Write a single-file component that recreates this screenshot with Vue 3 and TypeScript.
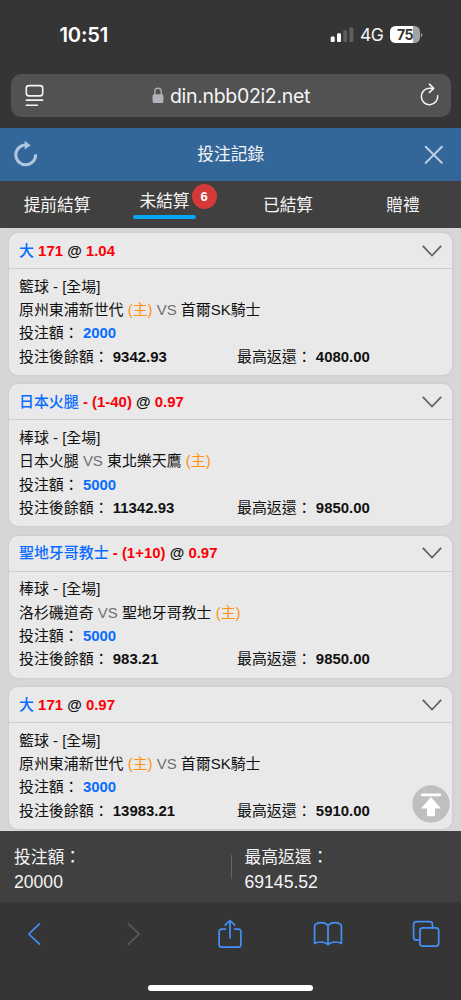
<script setup lang="ts">
interface Bet {
  pick: string
  line: string
  odds: string
  sport: string
  home: string
  away: string
  host: 'first' | 'second'
  stake: string
  balance: string
  payout: string
}

interface Tab {
  label: string
  key: string
  count?: number
}

const tabs: Tab[] = [
  { label: '提前結算', key: 'early' },
  { label: '未結算', key: 'open', count: 6 },
  { label: '已結算', key: 'settled' },
  { label: '贈禮', key: 'gift' },
]

const bets: Bet[] = [
  { pick: '大', line: '171', odds: '1.04', sport: '籃球', home: '原州東浦新世代', away: '首爾SK騎士', host: 'first', stake: '2000', balance: '9342.93', payout: '4080.00' },
  { pick: '日本火腿', line: '- (1-40)', odds: '0.97', sport: '棒球', home: '日本火腿', away: '東北樂天鷹', host: 'second', stake: '5000', balance: '11342.93', payout: '9850.00' },
  { pick: '聖地牙哥教士', line: '- (1+10)', odds: '0.97', sport: '棒球', home: '洛杉磯道奇', away: '聖地牙哥教士', host: 'second', stake: '5000', balance: '983.21', payout: '9850.00' },
  { pick: '大', line: '171', odds: '0.97', sport: '籃球', home: '原州東浦新世代', away: '首爾SK騎士', host: 'first', stake: '3000', balance: '13983.21', payout: '5910.00' },
]
</script>

<template>
  <div class="phone">
    <header class="browser">
      <div class="status">
        <span class="clock">10:51</span>
        <span class="signals">
          <svg class="bars" width="24" height="16" viewBox="0 0 24 16">
            <rect x="0.7" y="9.5" width="4" height="5.5" rx="1.2" fill="#fff" />
            <rect x="7" y="6.3" width="4" height="8.7" rx="1.2" fill="#fff" />
            <rect x="13.2" y="3.3" width="4" height="11.7" rx="1.2" fill="#5e5e5e" />
            <rect x="19.4" y="0.4" width="4" height="14.6" rx="1.2" fill="#5e5e5e" />
          </svg>
          <span class="net">4G</span>
          <span class="battery"><b>75</b></span>
          <svg class="nub" width="3" height="6" viewBox="0 0 3 6"><path d="M0.8 0.7 Q2.6 1.4 2.6 3 T0.8 5.3Z" fill="#8e8e8e" /></svg>
        </span>
      </div>
      <div class="address">
        <svg class="reader" width="20" height="24" viewBox="0 0 20 24" fill="none" stroke="#f4f4f4" stroke-width="1.6" stroke-linecap="round">
          <rect x="1.3" y="1.6" width="16.4" height="10.3" rx="2.6" />
          <path d="M1.3 16.1H17.7M1.3 21.3H12.4" />
        </svg>
        <span class="url">
          <svg class="lock" width="12" height="17" viewBox="0 0 12 17">
            <path d="M2.8 8V4.7C2.8 0.1 9.2 0.1 9.2 4.7V8" fill="none" stroke="#a9a8ae" stroke-width="1.5" />
            <rect x="0.6" y="7.2" width="10.8" height="8.8" rx="1.6" fill="#b3b2b8" />
          </svg>
          <span class="host">din.nbb02i2.net</span>
        </span>
        <svg class="reload" width="20" height="24" viewBox="0 0 20 24" fill="none" stroke="#f4f4f4" stroke-width="1.6" stroke-linecap="round" stroke-linejoin="round">
          <path d="M17.7 12.7A8.2 8.2 0 1 1 9.5 5.3H13.2" />
          <path d="M9.4 1.2L13.7 5.3L9.4 9.4" />
        </svg>
      </div>
    </header>

    <div class="titlebar">
      <svg class="refresh" width="26" height="28" viewBox="0 0 26 28">
        <path d="M22.6 14.3A9.9 9.9 0 1 1 12.8 5" fill="none" stroke="#b0c6de" stroke-width="3" />
        <path d="M11.7 0.7L17.7 5.2L11.7 9.6Z" fill="#b0c6de" />
      </svg>
      <h1>投注記錄</h1>
      <svg width="20" height="20" viewBox="0 0 20 20" fill="none" stroke="#bfd1e4" stroke-width="2" stroke-linecap="round">
        <path d="M1.7 1.7L17.9 17.9M17.9 1.7L1.7 17.9" />
      </svg>
    </div>

    <nav class="tabs">
      <span v-for="tab in tabs" :key="tab.key" class="tab" :class="[tab.key, { active: tab.count }]">
        {{ tab.label }}<i v-if="tab.count" class="badge">{{ tab.count }}</i>
      </span>
    </nav>

    <main class="list">
      <article v-for="(bet, i) in bets" :key="i" class="card">
        <div class="head">
          <div class="pick">
            <span class="blue name">{{ bet.pick }}</span> <span class="red">{{ bet.line }}</span> @ <span class="red">{{ bet.odds }}</span>
          </div>
          <svg width="20" height="12" viewBox="0 0 20 12" fill="none" stroke="#636363" stroke-width="1.8">
            <path d="M0.8 0.9L10 10.5L19.2 0.9" />
          </svg>
        </div>
        <div class="body">
          <div class="row">{{ bet.sport }} - [全場]</div>
          <div class="row">
            {{ bet.home }} <span v-if="bet.host === 'first'" class="orange">(主) </span><span class="vs">VS</span> {{ bet.away }} <span v-if="bet.host === 'second'" class="orange">(主)</span>
          </div>
          <div class="row">投注額： <b class="blue">{{ bet.stake }}</b></div>
          <div class="row split">
            <span>投注後餘額： <b>{{ bet.balance }}</b></span>
            <span>最高返還： <b>{{ bet.payout }}</b></span>
          </div>
        </div>
      </article>
      <svg class="to-top" width="38" height="38" viewBox="0 0 38 38">
        <circle cx="19" cy="19" r="18.7" fill="#bfbfbf" />
        <path d="M10.2 9.8H27.8" stroke="#fff" stroke-width="2.8" stroke-linecap="round" />
        <path d="M19 12L29 23.5H23V30.2Q23 31.3 21.9 31.3H16.1Q15 31.3 15 30.2V23.5H9Z" fill="#fff" />
      </svg>
    </main>

    <section class="totals">
      <div class="total"><span>投注額：</span><span class="num">20000</span></div>
      <div class="rule"></div>
      <div class="total"><span>最高返還：</span><span class="num">69145.52</span></div>
    </section>

    <footer class="toolbar">
      <div class="tools">
        <svg width="14" height="24" viewBox="0 0 14 24"><path d="M12.5 1.8L1.8 12L12.5 22.2" /></svg>
        <svg class="off" width="14" height="24" viewBox="0 0 14 24"><path d="M1.5 1.8L12.2 12L1.5 22.2" /></svg>
        <svg class="share" width="26" height="32" viewBox="0 0 26 32">
          <path d="M8.5 10.1H4.8Q2.1 10.1 2.1 12.8V25.5Q2.1 28.2 4.8 28.2H21.2Q23.9 28.2 23.9 25.5V12.8Q23.9 10.1 21.2 10.1H17.5" />
          <path d="M13 19V1.5M8.2 6.2L13 1.5L17.8 6.2" />
        </svg>
        <svg width="30" height="26" viewBox="0 0 30 26">
          <path d="M15 4.5C12.5 .9 5 .9 2.3 3.5Q1.6 4.2 1.6 5.2V22.6C5 20.3 11.5 20.3 15 23.6C18.5 20.3 25 20.3 28.4 22.6V5.2Q28.4 4.2 27.7 3.5C25 .9 17.5 .9 15 4.5V23.6" />
        </svg>
        <svg width="28" height="28" viewBox="0 0 28 28">
          <rect x="7.9" y="7.9" width="18.8" height="18.2" rx="2.8" />
          <path d="M7.9 20.2H4.5Q1.6 20.2 1.6 17.3V4.6Q1.6 1.7 4.5 1.7H17.6Q20.5 1.7 20.5 4.6V7.9" />
        </svg>
      </div>
      <div class="home"></div>
    </footer>
  </div>
</template>

<style>
body {
  background: #353535;
}
</style>

<style scoped>
.phone {
  width: 461px;
  height: 1000px;
  display: flex;
  flex-direction: column;
  overflow: hidden;
  background: #353535;
  color: #f5f5f5;
  font-family: "Liberation Sans", "Noto Sans CJK TC", sans-serif;
}
.phone svg {
  display: block;
  flex: none;
}
.browser {
  height: 128px;
  flex: none;
  font-family: Inter, sans-serif;
}
.status {
  height: 74px;
  box-sizing: border-box;
  padding: 22px 38px 0 59.5px;
  display: flex;
  justify-content: space-between;
}
.clock {
  font-size: 20.2px;
  line-height: 25px;
  font-weight: 600;
  letter-spacing: -0.2px;
  color: #fff;
}
.signals {
  display: flex;
  align-items: center;
  height: 25px;
}
.net {
  font-size: 17.5px;
  margin-left: 6px;
  width: 24px;
  letter-spacing: -0.5px;
}
.battery {
  width: 30px;
  height: 17px;
  margin-left: 6px;
  border-radius: 5.5px;
  background: linear-gradient(90deg, #fff 75%, #a3a3a3 75%);
  display: flex;
  align-items: center;
  justify-content: center;
  color: #353535;
}
.battery b {
  font-size: 14px;
  line-height: 17px;
  font-weight: 700;
  letter-spacing: -0.5px;
}
.address {
  height: 43px;
  margin: 0 10px 0 11px;
  padding: 0 11px 0 14px;
  box-sizing: border-box;
  border-radius: 10px;
  background: #525252;
  display: flex;
  align-items: center;
  justify-content: space-between;
}
.reload {
  margin-top: -2px;
}
.url {
  display: flex;
  align-items: center;
  gap: 6px;
  padding-right: 3px;
}
.host {
  font-size: 19.5px;
  line-height: 24px;
  letter-spacing: -0.32px;
  white-space: nowrap;
}
.titlebar {
  height: 53px;
  flex: none;
  box-sizing: border-box;
  padding: 0 16.5px 0 13px;
  display: flex;
  align-items: center;
  justify-content: space-between;
  background: #336699;
}
.refresh {
  margin-top: -2px;
}
.titlebar h1 {
  margin: 0;
  padding-right: 2px;
  font-size: 16.8px;
  line-height: 24px;
  font-weight: 400;
}
.tabs {
  height: 47px;
  flex: none;
  display: grid;
  grid-template-columns: 114px 101px 146px 84px;
  padding-right: 16px;
  background: #404040;
  font-size: 16.7px;
}
.tab {
  justify-self: center;
  position: relative;
  height: 38px;
  line-height: 50px;
  white-space: nowrap;
}
.tab.active {
  padding: 0 6.5px;
  line-height: 42px;
}
.tab.active::after {
  content: "";
  position: absolute;
  left: 0;
  right: 0;
  bottom: 0;
  height: 4px;
  border-radius: 2px;
  background: #06a7f5;
}
.badge {
  position: absolute;
  right: -20.5px;
  top: 3px;
  width: 25px;
  height: 25px;
  border-radius: 50%;
  background: #d63939;
  color: #fff;
  font: 700 13px/25px "Liberation Sans", sans-serif;
  text-align: center;
}
.list {
  height: 603px;
  flex: none;
  box-sizing: border-box;
  padding: 5px 9.4px 0 9.2px;
  display: flex;
  flex-direction: column;
  gap: 9.35px;
  position: relative;
  background: #d6d6d6;
  color: #111;
}
.card {
  height: 142px;
  flex: none;
  border-radius: 9px;
  background: #e9e9e9;
  box-shadow: 0 0 3px rgba(0, 0, 0, 0.09);
  font-size: 14.95px;
}
.head {
  height: 36px;
  box-sizing: border-box;
  padding: 0 9.6px 0 9.8px;
  border-bottom: 1px solid #cecece;
  display: flex;
  align-items: center;
  justify-content: space-between;
}
.pick {
  font-weight: 700;
  line-height: 24px;
  white-space: nowrap;
}
.name {
  font-weight: 500;
}
.body {
  padding: 5.5px 9.8px 0;
}
.row {
  height: 23.4px;
  line-height: 23.4px;
  white-space: nowrap;
}
.split {
  display: grid;
  grid-template-columns: 218px 1fr;
}
.blue {
  color: #0a6cff;
}
.red {
  color: #fb0007;
}
.orange {
  color: #ff9012;
}
.vs {
  color: #707070;
}
.to-top {
  position: absolute;
  right: 11.5px;
  bottom: 8px;
}
.totals {
  height: 71px;
  flex: none;
  box-sizing: border-box;
  padding: 15px 14px 0;
  display: grid;
  grid-template-columns: 217px 1px 1fr;
  background: #404040;
}
.total {
  display: flex;
  flex-direction: column;
  font-size: 16.8px;
  line-height: 24px;
}
.num {
  font-size: 17.6px;
}
.total:last-child {
  padding-left: 12.5px;
}
.rule {
  height: 24px;
  margin-top: 8.5px;
  background: #646464;
}
.toolbar {
  flex: 1;
  box-sizing: border-box;
  background: #353535;
}
.tools {
  width: 490px;
  height: 83px;
  margin-left: -15px;
  box-sizing: border-box;
  padding-bottom: 19px;
  display: grid;
  grid-template-columns: repeat(5, 1fr);
  align-items: center;
  justify-items: center;
  fill: none;
  stroke: #4391f7;
  stroke-width: 1.7;
  stroke-linecap: round;
  stroke-linejoin: round;
}
.off {
  stroke: #5a5a5a;
  margin-left: 4px;
}
.share {
  margin-top: 2px;
}
.home {
  width: 165px;
  height: 6px;
  margin: 0 auto;
  border-radius: 3px;
  background: #fff;
}
</style>
